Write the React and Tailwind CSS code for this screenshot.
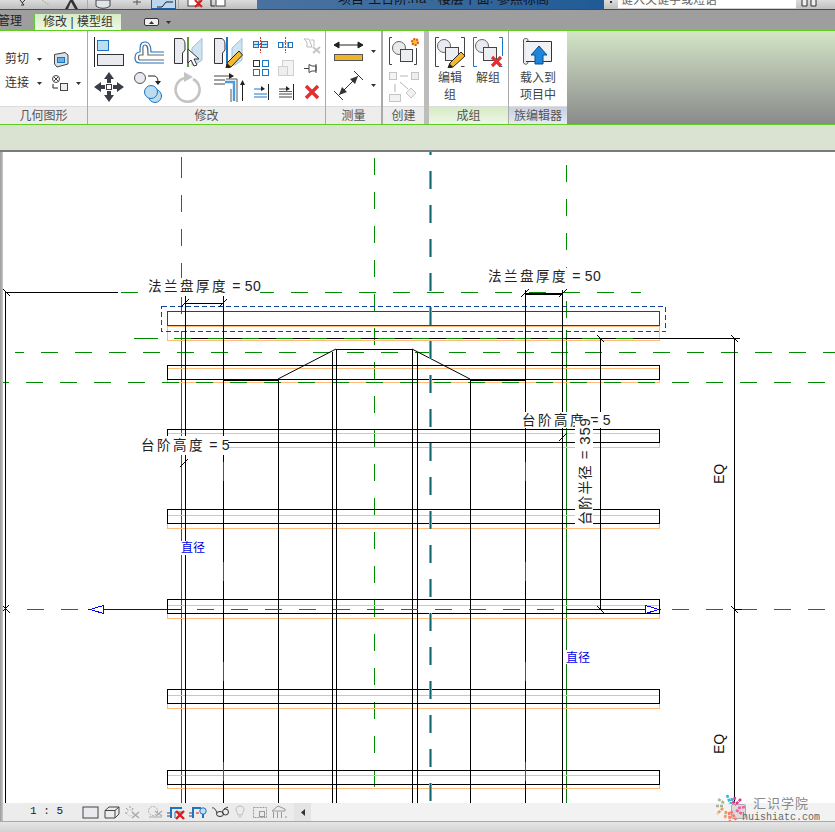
import React from 'react';

const Ic = ({ w, h, children, className = '' }) => (
  <svg width={w} height={h} viewBox={`0 0 ${w} ${h}`} className={`block shrink-0 ${className}`}>{children}</svg>
);
const Caret = ({ className = '' }) => (
  <svg width="5" height="3" viewBox="0 0 5 3" className={`block shrink-0 ${className}`}><path d="M0 0H5L2.5 3Z" fill="#333" /></svg>
);
const Label = ({ children, w, tone = 'bg-[#ededed]' }) => (
  <div className={`h-[18px] ${tone} text-center text-[12px] leading-[18px] text-[#555] border-t border-[#dcdcdc] whitespace-nowrap`} style={{ width: w }}>{children}</div>
);

const dark = '#3a3f45', blue = '#1c74c4';

const AlignI = () => (
  <Ic w={32} h={32}>
    <path d="M1.5 1V31" stroke="#222" strokeWidth="1" />
    <rect x="4.5" y="4.5" width="11" height="10" fill="#bcdcf0" stroke={blue} />
    <rect x="4.5" y="18.5" width="26" height="11" fill="#e8eaef" stroke="#333" />
  </Ic>
);
const OffsetI = () => (
  <Ic w={32} h={32}>
    <path d="M31 16H18C18 12 17 6 12 6S7 10 7 16C4 16 2 18 2 22S4 27 7 27H31" fill="none" stroke={blue} strokeWidth="1.2" />
    <path d="M31 19H15C15 13 15 9 12 9S10 13 10 19H7C5 19 5 24 7 24H31" fill="none" stroke="#666" strokeWidth="1.2" />
  </Ic>
);
const SplitShape = () => (
  <>
    <path d="M1.5 2.5H8C11 2.5 12 6 12 9V14L9.5 17V27.5H1.5Z" fill="#e9ebf0" stroke="#333" />
    <path d="M19 12L29 2.5V24L22 29H19Z" fill="#cfe3f1" stroke="#9fbfd6" />
  </>
);
const SplitI = () => (
  <Ic w={30} h={32}>
    <SplitShape />
    <path d="M15 1V31" stroke="#5b9a3c" strokeWidth="2" />
    <path d="M15 13V27L18 24L21 30L24 29L21 23H26Z" fill="#fff" stroke="#333" />
  </Ic>
);
const SplitPenI = () => (
  <Ic w={30} h={32}>
    <SplitShape />
    <path d="M14 1V27" stroke={blue} strokeWidth="2" />
    <path d="M26 15L29.5 19L18 31L13 32L14 27Z" fill="#f4b92c" stroke="#222" />
    <path d="M13 32L14 27L18 31Z" fill="#222" />
  </Ic>
);
const MoveI = () => (
  <Ic w={32} h={32}>
    <path d="M16 1L21 8H18V12H14V8H11ZM16 31L11 24H14V20H18V24H21ZM1 16L8 11V14H12V18H8V21ZM31 16L24 21V18H20V14H24V11Z" fill={dark} />
    <rect x="13.5" y="13.5" width="5" height="5" fill="#fff" stroke={dark} />
  </Ic>
);
const CopyI = () => (
  <Ic w={30} h={32}>
    <circle cx="7" cy="7" r="5.5" fill="#e8eaef" stroke="#555" />
    <path d="M15 5H21C24 5 25 8 25 11" fill="none" stroke="#222" />
    <path d="M22 10H28L25 14Z" fill="#222" />
    <circle cx="22" cy="25" r="6.5" fill="#bcdcf0" stroke={blue} />
    <circle cx="18" cy="21" r="6.5" fill="#bcdcf0" stroke={blue} />
  </Ic>
);
const RotateI = () => (
  <Ic w={30} h={32}>
    <path d="M12 7A12 12 0 1 0 20 8" fill="none" stroke="#c4c4c4" strokeWidth="2.6" />
    <path d="M11 1L20 6L11 11Z" fill="#c4c4c4" />
  </Ic>
);
const TrimI = () => (
  <Ic w={32} h={32}>
    <path d="M1 5H20M1 9H12M1 13H12" stroke="#444" />
    <path d="M16 2L21 5L16 8Z" fill="#222" />
    <path d="M12 11H21V30" fill="none" stroke="#4a9be0" strokeWidth="2.4" />
    <path d="M13 8H24V31M18 18V31" fill="none" stroke="#555" />
    <path d="M29.5 12V30" stroke="#222" />
    <path d="M29.5 9L32 14H27Z" fill="#222" />
  </Ic>
);

const SmallAlign = () => (
  <Ic w={18} h={18}>
    <rect x="1.5" y="5.5" width="5" height="6" fill="#cfe3f1" stroke={blue} />
    <rect x="9.5" y="5.5" width="6" height="6" fill="#cfe3f1" stroke={blue} />
    <path d="M1 8.5H16" stroke={blue} />
    <path d="M8.5 1V17" stroke="#c33" strokeDasharray="2 1" />
  </Ic>
);
const SmallSplit = () => (
  <Ic w={18} h={18}>
    <rect x="1.5" y="6.5" width="4" height="5" fill="#fff" stroke={blue} />
    <rect x="11.5" y="6.5" width="4" height="5" fill="#fff" stroke={blue} />
    <rect x="6.5" y="6.5" width="4" height="5" fill="#fff" stroke="#c33" strokeDasharray="1 1" />
    <path d="M8.5 1V17" stroke="#c33" strokeDasharray="2 1" />
  </Ic>
);
const ArrayI = () => (
  <Ic w={18} h={18}>
    <rect x="1.5" y="1.5" width="6" height="6" fill="#fff" stroke="#333" />
    <rect x="10.5" y="1.5" width="6" height="6" fill="#fff" stroke={blue} />
    <rect x="1.5" y="10.5" width="6" height="6" fill="#fff" stroke={blue} />
    <rect x="10.5" y="10.5" width="6" height="6" fill="#fff" stroke={blue} />
  </Ic>
);
const ScaleI = () => (
  <Ic w={18} h={18}>
    <rect x="5.5" y="1.5" width="11" height="15" fill="#f4f4f4" stroke="#cfcfcf" />
    <rect x="1.5" y="7.5" width="9" height="9" fill="#eee" stroke="#cfcfcf" />
  </Ic>
);
const ExtI = ({ many }) => (
  <Ic w={18} h={18}>
    <path d="M2 6H11M2 11H15M2 14H15" stroke={many ? '#444' : blue} />
    <path d="M9 3L13 6L9 8Z" fill="#222" />
    <path d="M16.5 1V17" stroke="#222" />
    {many && <path d="M2 8.5H15" stroke={blue} />}
  </Ic>
);
const PinOff = () => (
  <Ic w={18} h={18}>
    <path d="M1 3L4 6V11H9L6 3ZM8 4H11V10" fill="none" stroke="#bbb" />
    <path d="M10 11L17 17M17 11L10 17" stroke="#c5c5c5" strokeWidth="2" />
  </Ic>
);
const Pin = () => (
  <Ic w={18} h={18}>
    <path d="M1 9.5H6M6 5.5L9 7H13V12H9L6 13.5ZM13 5V14" fill="none" stroke="#444" />
  </Ic>
);
const RedX = () => (
  <Ic w={18} h={18}><path d="M3 3L15 15M15 3L3 15" stroke="#e03030" strokeWidth="3.4" /></Ic>
);

const GroupIcon = ({ pen }) => (
  <Ic w={32} h={32}>
    <path d="M5 1.5H1.5V30.5H5M27 1.5H30.5V20M27 30.5H30.5" fill="none" stroke={pen ? '#444' : blue} />
    <circle cx="10" cy="10" r="6.5" fill="#e8eaef" stroke="#666" />
    <rect x="11.5" y="11.5" width="13" height="13" fill="#eceef2" stroke="#444" />
    {pen ? (
      <>
        <path d="M27 16L31 20L19 31L14 32L16 27Z" fill="#f4b92c" stroke="#222" />
        <path d="M14 32L15.5 27.5L19 31Z" fill="#222" />
      </>
    ) : (
      <path d="M20 21L29 30M29 21L20 30" stroke="#e03030" strokeWidth="3.2" />
    )}
  </Ic>
);

const Pinwheel = () => (
  <svg width="32" height="28" viewBox="0 0 32 28" className="block">
    <g strokeWidth="2.6" fill="none" strokeDasharray="3 1">
      <path d="M13 1L16 9M18 4L17 10" stroke="#3db6dc" />
      <path d="M21 3L19 10M27 5L21 11" stroke="#ec2f8f" />
      <path d="M24 14L31 13M22 16L28 20" stroke="#ef5fa4" />
      <path d="M17 17L22 26M15 18L16 27" stroke="#f47c70" />
      <path d="M12 17L11 25M9 14L3 20" stroke="#f09b50" />
      <path d="M9 12L1 12M10 9L4 5" stroke="#a9b49a" />
    </g>
  </svg>
);

const SLABS = [
  [365.5, 379.5, 368.5, 382.5],
  [429.5, 442.5, 433.5, 447.5],
  [509.5, 523.5, 515.5, 528.5],
  [599.5, 613.5, 605.5, 618.5],
  [689.5, 703.5, 695.5, 708.5],
  [770.5, 784.5, 775.5, 788.5],
];
const G = '#008c00';

const L = (p) => <path fill="none" shapeRendering="crispEdges" {...p} />;
const Tick = ({ x, y }) => <path d={`M${x - 4} ${y + 4}L${x + 4} ${y - 4}`} stroke="#000" fill="none" />;

function Dim({ x, y, a, b, mask }) {
  return (
    <g>
      <rect x={mask[0]} y={mask[1]} width={mask[2]} height={mask[3]} fill="#fff" />
      <text x={x} y={y} fontSize="13.5" fill="#222" style={{ letterSpacing: 2.5 }}>
        {a}
        <tspan style={{ letterSpacing: 0.3 }} fontSize="14">{b}</tspan>
      </text>
    </g>
  );
}

function Drawing() {
  return (
    <svg width="832" height="651" viewBox="3 152 832 651" className="block font-['Liberation_Sans','Noto_Sans_CJK_SC',sans-serif]">
      {/* green reference planes */}
      <L d="M120.5 292.5H641" stroke={G} strokeDasharray="17 17" />
      <L d="M134 338.5H158" stroke={G} />
      <L d="M15 352.5H835" stroke={G} strokeDasharray="17 17" strokeDashoffset="8" />
      <L d="M181.5 161V340" stroke={G} strokeDasharray="17 17" />
      <L d="M181.5 157V178" stroke={G} />
      <L d="M374.5 158V803" stroke={G} strokeDasharray="17 17" />
      <L d="M566.5 165V330" stroke={G} strokeDasharray="17 17" />
      <L d="M181.5 338V803M566.5 330V803" stroke="#0a7a0a" />

      {/* slabs */}
      <rect x="167.5" y="326.5" width="492" height="14" fill="none" stroke="#ffbb77" shapeRendering="crispEdges" />
      {SLABS.map(([t, b, ot, ob]) => (
        <g key={t}>
          <rect x="167.5" y={ot} width="492" height={ob - ot} fill="none" stroke="#ffbb77" shapeRendering="crispEdges" />
          <rect x="167.5" y={t} width="492" height={b - t} fill="none" stroke="#000" shapeRendering="crispEdges" />
        </g>
      ))}
      <L d="M183 338.5H740" stroke="#000" />
      <L d="M140 338.5H641" stroke={G} strokeDasharray="17 17" />
      <L d="M3 382.5H835" stroke={G} strokeDasharray="17 17" strokeDashoffset="11" />

      <rect x="167.5" y="311.5" width="492" height="14" fill="none" stroke="#1040a8" shapeRendering="crispEdges" />
      <rect x="161.5" y="306.5" width="504" height="25" fill="none" stroke="#1040a8" strokeDasharray="5 3" shapeRendering="crispEdges" />

      {/* verticals */}
      <L d="M5.5 292V803M5.5 292.5H118" stroke="#000" />
      <L d="M185.5 296V803M223.5 296V803M278.5 379V803M332.5 352V803M336.5 349V803M412.5 349V803M417.5 352V803M470.5 379V803M525.5 290V803M562.5 290V803" stroke="#000" />
      <L d="M600.5 338V609M734.5 338V803" stroke="#000" />
      <L d="M223.5 462V803M525.5 462V803" stroke={G} strokeDasharray="19 81" />

      {/* trapezoid */}
      <L d="M336 349.5H412" stroke="#000" />
      <path d="M336 349L278 379M412 349L470 379" stroke="#000" fill="none" />
      <L d="M223 379.5H278M470 379.5H526" stroke="#000" strokeWidth="2" />

      {/* top dims */}
      <L d="M185 303.5H223" stroke="#000" />
      <L d="M525 293.5H563" stroke="#000" strokeWidth="2" />
      <Tick x={185} y={303} /><Tick x={223} y={303} /><Tick x={525} y={293} /><Tick x={563} y={293} />

      {/* center axis */}
      <L d="M430.5 137V803" stroke="#7aa0d8" strokeWidth="3" strokeDasharray="18 16" />
      <L d="M430.5 137V803" stroke="#0f6470" strokeWidth="1" strokeDasharray="18 16" />

      {/* horizontal diameter */}
      <L d="M27 609.5H90" stroke={G} strokeDasharray="17 17" />
      <L d="M90 609.5H181M566 609.5H659" stroke="#0000e0" />
      <L d="M197 609.5H566" stroke={G} strokeDasharray="17 17" />
      <L d="M672 609.5H835" stroke={G} strokeDasharray="17 17" />
      <path d="M90 609.5L103.5 605.5V613.5Z" fill="#fff" stroke="#0000e0" shapeRendering="crispEdges" />
      <path d="M659 609.5L645.5 605.5V613.5Z" fill="#fff" stroke="#0000e0" shapeRendering="crispEdges" />
      <L d="M734 609.5H742" stroke="#000" />
      <Tick x={5} y={609} />
      <path d="M3 606L10 613M731 606L738 613M597 606L604 613M597 335L604 342M731 335L738 342M3 289L10 296" stroke="#000" fill="none" />

      {/* labels */}
      <Dim x={148} y={291} a="法兰盘厚度" b=" = 50" mask={[147, 278, 113, 16]} />
      <Dim x={488} y={281} a="法兰盘厚度" b=" = 50" mask={[488, 268, 112, 16]} />
      <Dim x={141} y={450} a="台阶高度" b=" = 5" mask={[140, 436, 88, 19]} />
      <Dim x={522} y={425} a="台阶高度" b=" = 5" mask={[521, 412, 88, 16]} />
      <Tick x={184} y={463} /><Tick x={563} y={437} />
      <rect x="575" y="421" width="18" height="105" fill="#fff" />
      <text transform="rotate(-90 590 525)" x="590" y="525" fontSize="14" fill="#222" style={{ letterSpacing: 1.2 }}>
        台阶半径<tspan style={{ letterSpacing: 0.8 }} fontSize="15"> = 359</tspan>
      </text>
      <text transform="rotate(-90 724 484)" x="724" y="484" fontSize="14" fill="#111">EQ</text>
      <text transform="rotate(-90 724 754)" x="724" y="754" fontSize="14" fill="#111">EQ</text>
      <rect x="181" y="541" width="25" height="14" fill="#fff" />
      <rect x="566" y="650" width="26" height="14" fill="#fff" />
      <text x="181" y="552" fontSize="12" fill="#0000e8">直径</text>
      <text x="566" y="662" fontSize="12" fill="#0000e8">直径</text>
    </svg>
  );
}

const StatusIcons = () => (
  <div className="flex items-center ml-[18px]">
    <Ic w={17} h={13} className="mr-[5px]"><rect x="1" y="1" width="15" height="11" fill="#e8eaf0" stroke="#444" /></Ic>
    <Ic w={16} h={13} className="mr-[4px]"><path d="M1 4.5H11V12H1ZM1 4.5L5 1H15L11 4.5M15 1V8L11 12" fill="none" stroke="#444" /></Ic>
    <Ic w={16} h={14} className="mr-[7px]"><path d="M6 1V3M2 3L4 5M1 8H3M9 3L8 5" stroke="#999" /><circle cx="6" cy="8" r="3" fill="none" stroke="#bbb" strokeDasharray="1 1" /><path d="M8 7L15 13M15 7L8 13" stroke="#aaa" strokeWidth="1.6" /></Ic>
    <Ic w={16} h={14} className="mr-[3px]"><circle cx="6" cy="6" r="4.5" fill="none" stroke="#aaa" strokeDasharray="2 1" /><path d="M2 12H15M8 6L15 11M15 6L9 11" stroke="#aaa" strokeWidth="1.2" /></Ic>
    <Ic w={20} h={15} className="mr-[2px]"><path d="M5 13V3H16" fill="none" stroke={blue} strokeWidth="2" /><path d="M9 13V7H16" fill="none" stroke={blue} /><path d="M1 8H4M1 11H4" stroke="#444" /><path d="M10 6L18 14M18 6L10 14" stroke="#e01818" strokeWidth="2.4" /></Ic>
    <Ic w={20} h={15} className="mr-[3px]"><path d="M5 13V3H13" fill="none" stroke={blue} strokeWidth="2" /><path d="M1 8H4M1 11H4" stroke="#444" /><path d="M8 8H11" stroke="#e01818" /><circle cx="15" cy="6" r="3.2" fill="#bfe0f5" stroke={blue} /><path d="M15 9V13" stroke={blue} strokeWidth="2" /></Ic>
    <Ic w={18} h={13} className="mr-[6px]"><path d="M1 2C3 1 5 4 6 7M17 1L13 3" stroke="#333" fill="none" /><ellipse cx="9" cy="8" rx="3.5" ry="2.5" fill="none" stroke="#333" /><ellipse cx="14.5" cy="6" rx="3" ry="3" fill="none" stroke="#333" /></Ic>
    <Ic w={10} h={14} className="mr-[7px]"><path d="M5 1C2 1 1 3 1 5C1 7 3 8 3 10H7C7 8 9 7 9 5C9 3 8 1 5 1ZM3.5 12H6.5" fill="none" stroke="#bbb" /></Ic>
    <Ic w={16} h={14} className="mr-[3px]"><rect x="1.5" y="2.5" width="13" height="10" fill="none" stroke="#999" strokeDasharray="2 1" /><rect x="7.5" y="6.5" width="5" height="5" fill="none" stroke="#999" /></Ic>
    <Ic w={17} h={15}><path d="M1 6L7 1L14 4V6H1ZM2.5 7V13M6.5 7V13M10.5 7V13M14 12H16" fill="none" stroke="#999" /></Ic>
  </div>
);

export default function App() {
  return (
    <div className="relative w-[835px] h-[832px] overflow-hidden bg-white font-['Liberation_Sans','Noto_Sans_CJK_SC',sans-serif]">
      {/* quick access bar */}
      <div className="h-[10px] flex bg-gradient-to-b from-[#dcdcdc] to-[#bfbfbf] border-b border-[#4a4a4a] overflow-hidden">
        <div className="w-[257px] flex items-end relative">
          <Ic w={257} h={9}>
            <path d="M20 0L24 5L21 5M25 0L22 3" stroke="#333" fill="none" />
            <path d="M42 0L49 5" stroke="#aaa" strokeDasharray="2 1" />
            <path d="M65 9L70 0H73L78 9H75L71 2L68 9Z" fill="#333" />
            <path d="M96 0V6C100 9 106 9 110 6V0Z" fill="#dfe3ea" stroke="#444" />
            <path d="M137 0V5M133 2H141" stroke="#555" />
            <rect x="151.5" y="-2" width="24" height="10.5" fill="#bcd6ee" stroke="#1c5fa8" />
            <path d="M157 7H162M162 7L166 2H173" stroke="#222" fill="none" />
            <rect x="188" y="-3" width="11" height="9" fill="#fff" stroke="#444" />
            <path d="M195 0L202 7M202 0L195 7" stroke="#d62020" strokeWidth="2" />
            <rect x="216" y="-2" width="9" height="8" fill="#fff" stroke="#444" />
            <path d="M211 0V6H215" stroke="#222" fill="none" />
            <path d="M87.5 0V9M178.5 0V9" stroke="#aaa" />
          </Ic>
        </div>
        <div className="w-[347px] bg-gradient-to-r from-[#4a72a0] via-[#3a6a9c] to-[#1f5a96] overflow-hidden">
          <div className="-mt-[10px] pl-[81px] text-[13px] leading-[18px] text-[#10151c] whitespace-nowrap">项目-主台阶.rfa - 楼层平面: 参照标高</div>
        </div>
        <div className="w-[14px] flex justify-center"><div className="w-[2px] h-[2px] bg-[#333] mt-[1px]" /></div>
        <div className="w-[178px] bg-white overflow-hidden border-b border-[#cfcfcf]">
          <div className="-mt-[8px] pl-[3px] text-[12px] leading-[16px] text-[#666] whitespace-nowrap">键入关键字或短语</div>
        </div>
        <div className="flex-1 pl-[4px]">
          <Ic w={20} h={9}><path d="M2 0V6H7V0M11 0V6H16V0" fill="#eee" stroke="#333" /></Ic>
        </div>
      </div>

      {/* tabs */}
      <div className="h-[20px] bg-[#9e9e9e] flex items-end relative">
        <div className="w-[34px] h-[20px] text-[12px] leading-[22px] text-[#222] overflow-hidden whitespace-nowrap -ml-[2px]">管理</div>
        <div className="w-[88px] h-[17px] ml-[2px] border border-b-0 border-[#66cc33] bg-gradient-to-b from-[#d6ecc4] to-[#f0f8e8] text-center text-[12px] leading-[16px] text-[#333] whitespace-nowrap">修改 | 模型组</div>
        <div className="ml-[22px] mb-[4px] w-[15px] h-[8px] rounded-[2px] bg-[#f2f2f2] border border-[#333] flex items-center justify-center">
          <svg width="5" height="3" viewBox="0 0 5 3"><path d="M0 3H5L2.5 0Z" fill="#333" /></svg>
        </div>
        <Caret className="ml-[7px] mb-[6px]" />
      </div>

      {/* ribbon */}
      <div className="h-[95px] flex border-y border-[#5fcf1f] bg-gradient-to-b from-[#d3e6c6] to-[#8b8b8b]">
        <div className="flex flex-col bg-white">
          <div className="h-[75px] w-[87px] pt-[20px] pl-[5px] flex flex-col gap-[8px] text-[12px] text-[#333]">
            <div className="flex items-center h-[16px]">
              <span className="w-[32px] whitespace-nowrap">剪切</span>
              <Caret className="mr-[11px]" />
              <Ic w={16} h={17}><path d="M1.5 3.5L12 1.5L15 4V13L4 16L1.5 13Z" fill="#d5e0ea" stroke="#444" /><rect x="4.5" y="6.5" width="7" height="5" fill="#6fb0e0" stroke={blue} /></Ic>
            </div>
            <div className="flex items-center h-[16px]">
              <span className="w-[32px] whitespace-nowrap">连接</span>
              <Caret className="mr-[9px]" />
              <Ic w={18} h={17} className="mr-[7px]"><circle cx="5" cy="4" r="3.5" fill="#fff" stroke="#444" /><path d="M3 2L7 6M7 2L3 6" stroke="#444" /><rect x="9.5" y="8.5" width="7" height="7" fill="#eee" stroke="#444" /><path d="M2 9V13H7" fill="none" stroke="#222" /></Ic>
              <Caret />
            </div>
          </div>
          <Label w={87}>几何图形</Label>
        </div>
        <div className="w-[1px] bg-[#aaaaaa]" />
        <div className="flex flex-col bg-white">
          <div className="h-[75px] w-[237px] flex pt-[4px]">
            <div className="w-[164px] pl-[5px] grid grid-cols-[40px_40px_40px_40px] grid-rows-[35px_35px] pt-[1px]">
              <AlignI /><OffsetI /><SplitI /><SplitPenI />
              <MoveI /><CopyI /><RotateI /><TrimI />
            </div>
            <div className="grid grid-cols-[25px_26px_20px] grid-rows-[23px_24px_23px] pt-[1px]">
              <SmallAlign /><SmallSplit /><PinOff />
              <ArrayI /><ScaleI /><Pin />
              <ExtI /><ExtI many /><RedX />
            </div>
          </div>
          <Label w={237}>修改</Label>
        </div>
        <div className="w-[1px] bg-[#aaaaaa]" />
        <div className="flex flex-col bg-white">
          <div className="h-[75px] w-[55px] pl-[7px] pt-[9px] flex flex-col gap-[8px]">
            <div className="flex items-center">
              <Ic w={31} h={22} className="mr-[7px]"><path d="M1 5H30M1 5L6 2V8ZM30 5L25 2V8Z" fill="#222" stroke="#222" /><rect x="1.5" y="14.5" width="28" height="6" fill="#f0b429" stroke="#555" /></Ic>
              <Caret />
            </div>
            <div className="flex items-center">
              <Ic w={31} h={30} className="mr-[7px]"><path d="M1 21L10 30M21 1L30 10M6 25L25 6" stroke="#333" fill="none" /><path d="M25 6L17 9L22 14ZM6 25L14 22L9 17Z" fill="#333" /></Ic>
              <Caret />
            </div>
          </div>
          <Label w={55}>测量</Label>
        </div>
        <div className="w-[2px] bg-[#aaaaaa]" />
        <div className="flex flex-col bg-white">
          <div className="h-[75px] w-[41px] pl-[5px] pt-[5px] flex flex-col gap-[4px]">
            <Ic w={32} h={30}>
              <path d="M4 1.5H1.5V28.5H4M26 28.5H28.5V12" fill="none" stroke="#444" />
              <circle cx="11" cy="12" r="6.5" fill="#e8eaef" stroke="#666" />
              <rect x="12.5" y="13.5" width="12" height="12" fill="#eceef2" stroke="#444" />
              <circle cx="27" cy="6" r="3" fill="#f6c22c" stroke="#e2501a" strokeDasharray="2 1" strokeWidth="2" />
            </Ic>
            <Ic w={32} h={32}>
              <rect x="1.5" y="2.5" width="7" height="7" fill="#f4f4f4" stroke="#c4c4c4" />
              <rect x="23.5" y="2.5" width="7" height="7" fill="#eee" stroke="#c4c4c4" />
              <path d="M12 6H20M7 14V22M12 12L20 19" stroke="#b5b5b5" />
              <rect x="1.5" y="24.5" width="11" height="7" fill="#f1f1f1" stroke="#c4c4c4" />
              <path d="M23 18L28 23L23 28L18 23Z" fill="#f1f1f1" stroke="#c4c4c4" />
            </Ic>
          </div>
          <Label w={41}>创建</Label>
        </div>
        <div className="w-[5px] bg-[#bcbcbc]" />
        <div className="flex flex-col bg-white">
          <div className="h-[75px] w-[79px] flex pl-[5px] pt-[5px] gap-[6px] text-[12px] leading-[17px] text-[#444] text-center">
            <div className="w-[32px] flex flex-col items-center">
              <GroupIcon pen />
              <div className="whitespace-nowrap mt-[2px]">编辑</div>
              <div>组</div>
            </div>
            <div className="w-[32px] flex flex-col items-center">
              <GroupIcon />
              <div className="whitespace-nowrap mt-[2px]">解组</div>
            </div>
          </div>
          <Label w={79} tone="bg-gradient-to-b from-[#d4ebc4] to-[#eef7e6]">成组</Label>
        </div>
        <div className="w-[1px] bg-[#aaaaaa]" />
        <div className="flex flex-col bg-white">
          <div className="h-[75px] w-[58px] flex flex-col items-center pt-[6px] text-[12px] leading-[17px] text-[#444]">
            <Ic w={32} h={30}>
              <path d="M1.5 3C1.5 1 6 1 6 3V25C6 28 1.5 28 1.5 25Z" fill="#e8eaef" stroke="#555" />
              <path d="M4 4.5H29.5V24.5H4" fill="#f0f1f4" stroke="#333" />
              <path d="M17 9L25 18H21V27H13V18H9Z" fill="#1c86dc" stroke="#114a88" />
            </Ic>
            <div className="whitespace-nowrap mt-[3px]">载入到</div>
            <div className="whitespace-nowrap">项目中</div>
          </div>
          <Label w={58} tone="bg-gradient-to-b from-[#c9cfe0] to-[#e8eaf2]">族编辑器</Label>
        </div>
        <div className="flex-1" />
      </div>

      {/* strip */}
      <div className="h-[25px] bg-[#dae3d2]" />

      {/* canvas */}
      <div className="h-[653px] border-t-2 border-[#7a7a7a] flex">
        <div className="w-[3px] bg-gradient-to-r from-[#9a9a9a] to-[#c8c8c8]" />
        <Drawing />
      </div>

      {/* status */}
      <div className="h-[18px] flex bg-[#ececec]">
        <div className="w-[3px] bg-gradient-to-r from-[#9a9a9a] to-[#c8c8c8]" />
        <div className="w-[61px] pl-[27px] text-[11px] leading-[17px] text-[#222] font-['Liberation_Mono',monospace] whitespace-nowrap">1 : 5</div>
        <StatusIcons />
        <div className="ml-[6px] w-[17px] bg-[#e4e4e4] flex items-center justify-center">
          <svg width="4" height="7" viewBox="0 0 4 7"><path d="M4 0V7L0 3.5Z" fill="#333" /></svg>
        </div>
        <div className="flex-1 bg-[#f2f2f2]" />
      </div>
      <div className="h-[11px] border-t border-[#a8a8a8] bg-gradient-to-b from-[#e6e6e6] to-[#d2d2d2]" />

      {/* watermark */}
      <div className="absolute left-[731px] top-[804px] w-[15px] h-[15px] rounded-[2px] bg-[#dcdcdc] border border-[#aaa]" />
      <div className="absolute left-[714px] top-[794px]"><Pinwheel /></div>
      <div className="absolute left-[753px] top-[796px] text-[13px] leading-[16px] tracking-[1px] text-[#888] whitespace-nowrap">汇识学院</div>
      <div className="absolute left-[742px] top-[812px] text-[10px] leading-[12px] text-[#666] font-['Liberation_Mono',monospace] whitespace-nowrap">huishiatc.com</div>
    </div>
  );
}
